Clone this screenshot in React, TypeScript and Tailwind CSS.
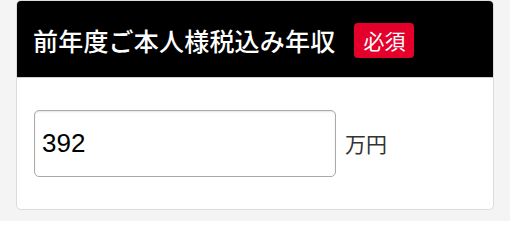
export default function App() {
  return (
    <div className="min-h-[221px] bg-[#f4f4f4] px-4 pb-[11px] font-['Noto_Sans_CJK_JP',sans-serif]">
      <div className="overflow-hidden rounded-[5px] border border-[#dcdcdc] bg-white">
        <div className="flex h-[76px] items-center gap-[19px] bg-black pl-[16px] pt-[2px]">
          <h2 className="text-[25px] font-medium leading-none tracking-[0.2px] text-white">前年度ご本人様税込み年収</h2>
          <span className="rounded-[4px] bg-[#e4002b] px-[9px] py-[7px] text-[21px] leading-none text-white">必須</span>
        </div>
        <div className="flex items-center gap-[9px] border-t border-[#cfcfcf] px-[17px] pb-[32px] pt-[32px]">
          <input
            defaultValue="392"
            className="h-[67px] w-[302px] rounded-[5px] border border-[#aaaaaa] px-[7px] font-['Liberation_Sans',sans-serif] text-[26px] text-black shadow-[inset_0_1px_2px_rgba(0,0,0,0.1)] outline-none"
          />
          <span className="text-[21px] text-[#333]">万円</span>
        </div>
      </div>
    </div>
  );
}
